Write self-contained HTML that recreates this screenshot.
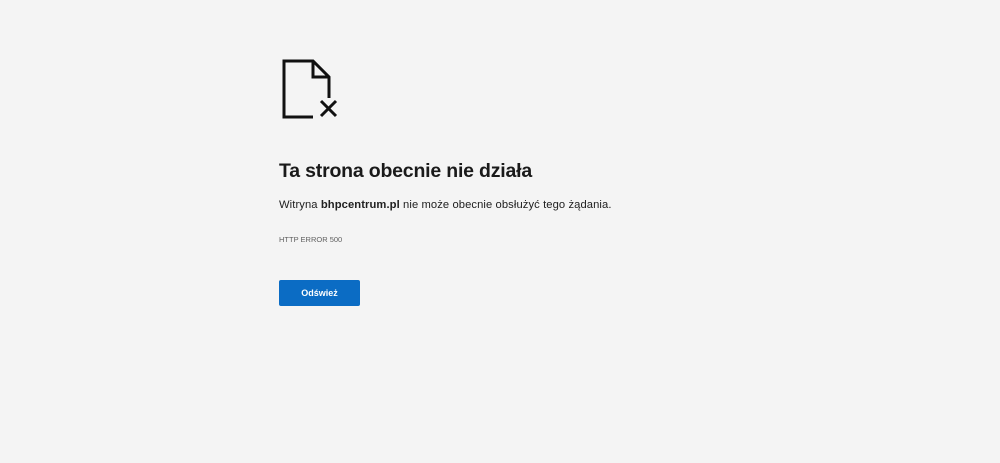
<!DOCTYPE html>
<html><head><meta charset="utf-8"><style>
body{margin:0;width:1000px;height:463px;background:#f4f4f4;font-family:"Liberation Sans",sans-serif;position:relative;overflow:hidden}
svg{position:absolute;left:280px;top:57px}
h1{position:absolute;left:279px;top:160px;margin:0;font-size:19.5px;font-weight:bold;color:#1a1a1a;letter-spacing:-0.2px}
.p{position:absolute;left:279px;top:199px;font-size:11.2px;color:#202020;letter-spacing:0.1px}
.e{position:absolute;left:279px;top:235px;font-size:7.5px;color:#606060}
.b{position:absolute;left:279px;top:280px;width:81px;height:26px;background:#0b6cc4;border-radius:2px;color:#fff;font-size:9px;font-weight:bold;text-align:center;line-height:26px}
</style></head><body>
<svg width="62" height="64" viewBox="0 0 62 64" fill="none" stroke="#111" stroke-width="3">
<path d="M33 60H4V4H33L49 20V41"/>
<path d="M33 4V20H49"/>
<path d="M41 44L56 59M56 44L41 59"/>
</svg>
<h1>Ta strona obecnie nie działa</h1>
<div class="p">Witryna <b>bhpcentrum.pl</b> nie może obecnie obsłużyć tego żądania.</div>
<div class="e">HTTP ERROR 500</div>
<div class="b">Odśwież</div>
</body></html>
